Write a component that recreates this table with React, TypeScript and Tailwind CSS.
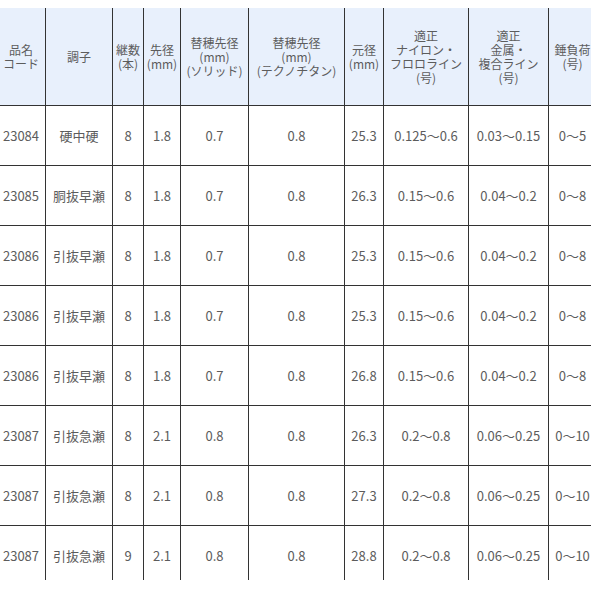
import React from 'react';

const headers: string[][] = [
  ['品名', 'コード'],
  ['調子'],
  ['継数', '(本)'],
  ['先径', '(mm)'],
  ['替穂先径', '(mm)', '(ソリッド)'],
  ['替穂先径', '(mm)', '(テクノチタン)'],
  ['元径', '(mm)'],
  ['適正', 'ナイロン・', 'フロロライン', '(号)'],
  ['適正', '金属・', '複合ライン', '(号)'],
  ['錘負荷', '(号)'],
];

const rows: string[][] = [
  ['23084', '硬中硬', '8', '1.8', '0.7', '0.8', '25.3', '0.125～0.6', '0.03～0.15', '0～5'],
  ['23085', '胴抜早瀬', '8', '1.8', '0.7', '0.8', '26.3', '0.15～0.6', '0.04～0.2', '0～8'],
  ['23086', '引抜早瀬', '8', '1.8', '0.7', '0.8', '25.3', '0.15～0.6', '0.04～0.2', '0～8'],
  ['23086', '引抜早瀬', '8', '1.8', '0.7', '0.8', '25.3', '0.15～0.6', '0.04～0.2', '0～8'],
  ['23086', '引抜早瀬', '8', '1.8', '0.7', '0.8', '26.8', '0.15～0.6', '0.04～0.2', '0～8'],
  ['23087', '引抜急瀬', '8', '2.1', '0.8', '0.8', '26.3', '0.2～0.8', '0.06～0.25', '0～10'],
  ['23087', '引抜急瀬', '8', '2.1', '0.8', '0.8', '27.3', '0.2～0.8', '0.06～0.25', '0～10'],
  ['23087', '引抜急瀬', '9', '2.1', '0.8', '0.8', '28.8', '0.2～0.8', '0.06～0.25', '0～10'],
];

export default function App() {
  return (
    <div className="w-[591px] h-[591px] bg-white overflow-hidden font-['Noto_Sans_CJK_JP','Noto_Sans',sans-serif] text-[#5c5c5c]">
      {/* テーブル本体（左右は見切れ） */}
      <div className="mt-2 h-[572px] overflow-hidden">
        <div className="-ml-[3px] w-[600px] grid grid-cols-[49px_67px_31px_37px_68px_96px_39px_85px_80px_48px]">
          {headers.map((lines, i) => (
            <div
              key={i}
              className="h-[98px] bg-[#e8f0fc] border-r border-b border-[#333] flex flex-col items-center justify-center text-center text-[12px] leading-[14px] whitespace-nowrap"
            >
              {lines.map((l, j) => (
                <span key={j}>{l}</span>
              ))}
            </div>
          ))}
          {rows.map((r, ri) =>
            r.map((c, ci) => (
              <div
                key={`${ri}-${ci}`}
                className="h-[60px] border-r border-b border-[#333] flex items-center justify-center text-[13px] whitespace-nowrap"
              >
                {c}
              </div>
            ))
          )}
        </div>
      </div>
    </div>
  );
}
